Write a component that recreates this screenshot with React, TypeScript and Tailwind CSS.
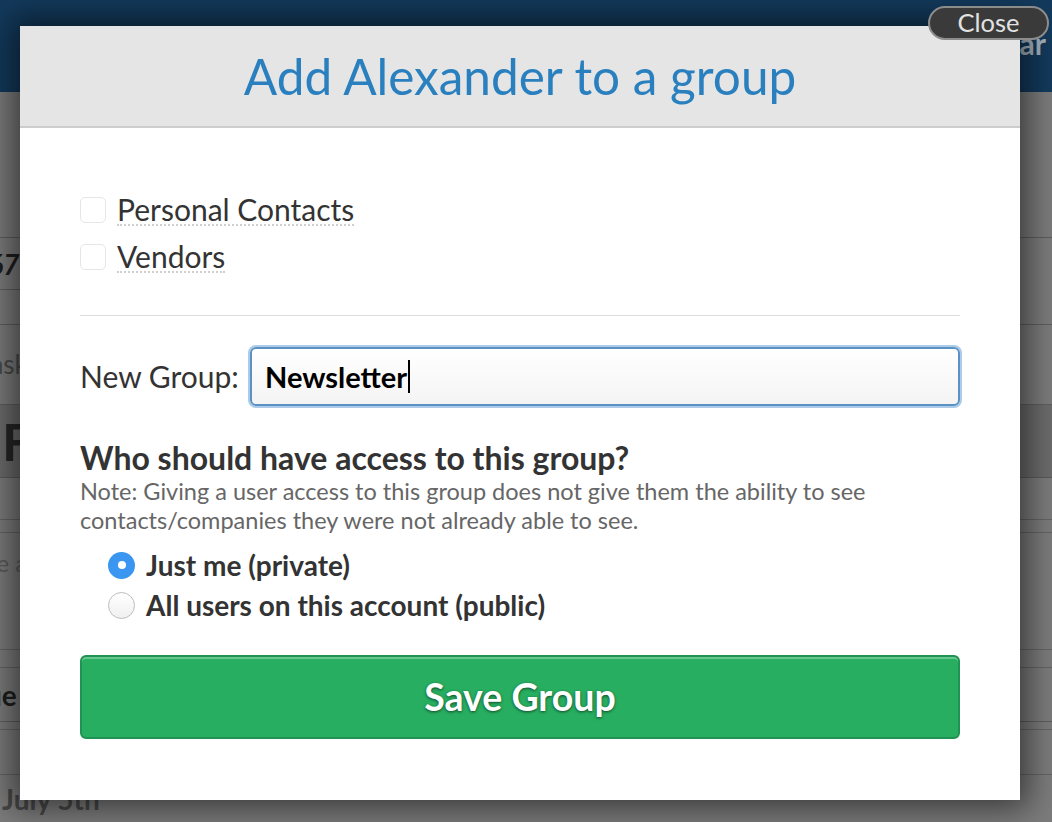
import React from "react";

const lato = { fontFamily: "Lato, 'Open Sans', sans-serif" };

function BackgroundPage() {
  return (
    <div className="flex flex-col w-full h-full">
      <div className="h-[92px] bg-[#133a5c] flex items-center justify-end pr-[6px] shrink-0">
        <span className="text-[30px] font-bold text-[#a8b4bf] leading-none mt-[-6px]">Calendar</span>
      </div>
      <div className="flex-1 flex flex-col">
        <div className="h-[146px] border-b border-[#5e5e5e]" />
        <div className="h-[52px] border-b border-[#5e5e5e] w-[300px] flex items-center">
          <span className="ml-[-28px] text-[28px] font-bold italic text-[#1e1e1e]">567</span>
        </div>
        <div className="h-[35px] border-b border-[#5e5e5e]" />
        <div className="h-[80px] border-b border-[#5e5e5e] flex items-center">
          <span className="ml-[-22px] text-[26px] text-[#4a4a4a]">Tasks</span>
        </div>
        <div className="h-[73px] border-b border-[#5a5a5a] bg-[#6c6c6c] flex items-center">
          <span className="ml-[2px] text-[52px] font-bold text-[#262626] leading-none">F</span>
        </div>
        <div className="h-[42px] border-b border-[#646464]" />
        <div className="h-[13px] border-b border-[#646464]" />
        <div className="h-[117px] border-b border-[#646464] flex items-start pt-[12px]">
          <span className="ml-[-12px] text-[24px] text-[#5a5a5a]">te a</span>
        </div>
        <div className="h-[18px] border-b border-[#646464]" />
        <div className="h-[54px] border-b border-[#5e5e5e] flex items-center">
          <span className="ml-[-14px] text-[28px] font-bold text-[#1e1e1e]">ue</span>
        </div>
        <div className="h-[8px] border-b border-[#646464]" />
        <div className="h-[45px] border-b border-[#646464]" />
        <div className="flex items-start pt-[10px]">
          <span className="ml-[2px] text-[28px] font-bold text-[#474747] leading-none">July 5th</span>
        </div>
      </div>
    </div>
  );
}

function Checkbox() {
  return <span className="w-[26px] h-[26px] rounded-[5px] border border-[#e6e6e6] bg-white shrink-0" />;
}

function Radio({ checked }: { checked?: boolean }) {
  if (checked) {
    return (
      <span className="w-[27px] h-[27px] rounded-full bg-[#3a96f0] flex items-center justify-center shrink-0">
        <span className="w-[8px] h-[8px] rounded-full bg-white" />
      </span>
    );
  }
  return (
    <span className="w-[27px] h-[27px] rounded-full border border-[#bdbdbd] bg-gradient-to-b from-white to-[#f0f0f0] shrink-0" />
  );
}

export default function App() {
  return (
    <div className="relative w-[1052px] h-[822px] overflow-hidden bg-[#7c7c7c]" style={lato}>
      <BackgroundPage />
      <div className="absolute inset-0 pl-[20px] pt-[26px]">
        <div className="w-[1000px] h-[774px] bg-white flex flex-col shadow-[0_0_30px_8px_rgba(0,0,0,0.55)]">
          <div className="h-[102px] bg-[#e5e5e5] border-b-2 border-[#cdcdcd] flex items-center justify-center shrink-0">
            <h1 className="text-[49.5px] text-[#2a80bf] leading-none mt-[1px]">Add Alexander to a group</h1>
          </div>
          <div className="px-[60px] pt-[58px] flex flex-col">
            <label className="h-[47px] flex items-center gap-[11px]">
              <Checkbox />
              <span className="text-[30px] text-[#333] leading-[30px] border-b-2 border-dotted border-[#cfcfcf]">Personal Contacts</span>
            </label>
            <label className="h-[47px] flex items-center gap-[11px]">
              <Checkbox />
              <span className="text-[30px] text-[#333] leading-[30px] border-b-2 border-dotted border-[#cfcfcf]">Vendors</span>
            </label>
            <div className="mt-[35px] h-px bg-[#dcdcdc]" />
            <div className="mt-[31px] flex items-center">
              <span className="text-[30px] text-[#333] w-[170px] shrink-0">New Group:</span>
              <div className="flex-1 h-[59px] rounded-[6px] border-2 border-[#5b92c4] shadow-[0_0_0_2px_#abcbe8] bg-gradient-to-b from-white to-[#f4f4f4] flex items-center pl-[13px]">
                <span className="text-[29px] font-bold text-black leading-none">Newsletter</span>
                <span className="w-[2px] h-[33px] bg-black ml-[1px]" />
              </div>
            </div>
            <h2 className="mt-[34px] text-[32px] font-bold text-[#333] leading-[36px]">Who should have access to this group?</h2>
            <p className="text-[23.5px] text-[#666] leading-[29px] mt-[1px]">
              Note: Giving a user access to this group does not give them the ability to see
              <br />
              contacts/companies they were not already able to see.
            </p>
            <div className="mt-[10px] pl-[28px] flex flex-col">
              <label className="h-[40px] flex items-center gap-[11px]">
                <Radio checked />
                <span className="text-[28px] font-bold text-[#333]">Just me (private)</span>
              </label>
              <label className="h-[40px] flex items-center gap-[11px]">
                <Radio />
                <span className="text-[28px] font-bold text-[#333]">All users on this account (public)</span>
              </label>
            </div>
            <button className="mt-[30px] h-[84px] rounded-[6px] bg-[#27ae60] border-2 border-[#1f9352] shadow-[inset_0_2px_0_rgba(255,255,255,0.3)] text-white text-[37.5px] font-bold [text-shadow:0_1px_3px_rgba(0,0,0,0.6)]">
              Save Group
            </button>
          </div>
        </div>
      </div>
      <button className="absolute left-[928px] top-[6px] w-[121px] h-[34px] rounded-full bg-[#3a3a3a] border-2 border-[#8c8c8c] text-[#e2e2e2] text-[25.5px] leading-none flex items-center justify-center">
        Close
      </button>
    </div>
  );
}
